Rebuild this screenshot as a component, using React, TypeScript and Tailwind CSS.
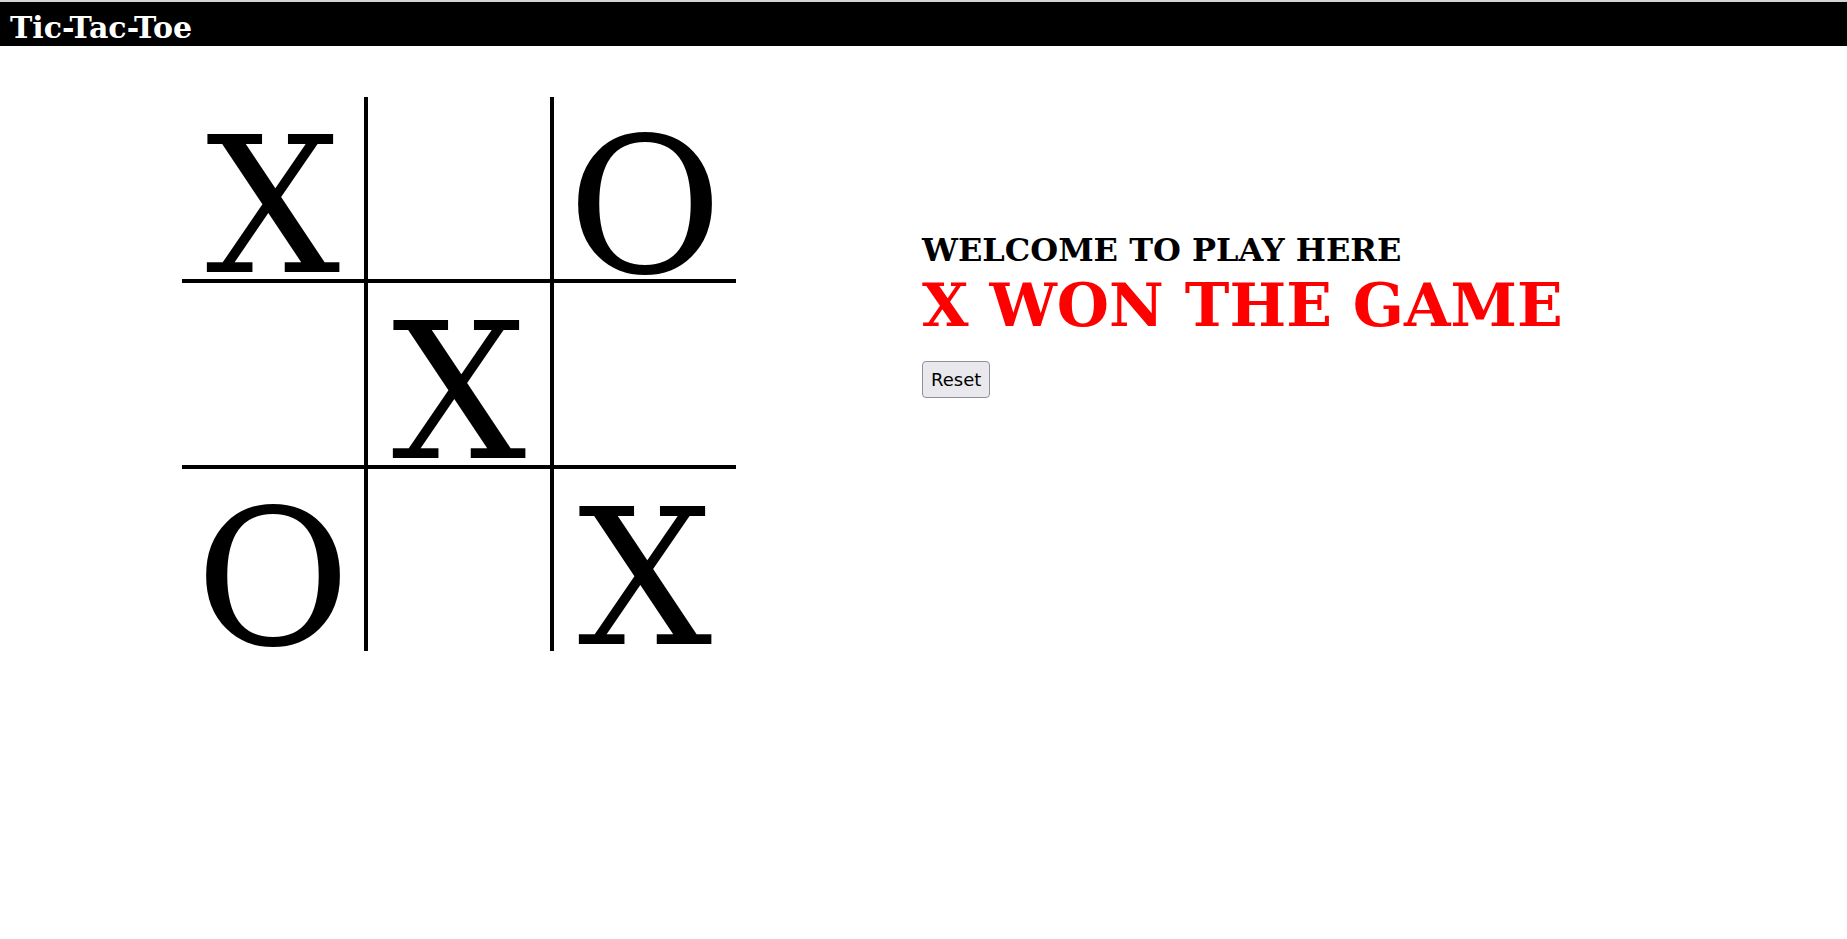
import React from "react";

const board = ["X", "", "O", "", "X", "", "O", "", "X"];

function App() {
  return (
    <div className="min-h-[939px] bg-white font-['DejaVu_Serif',serif]">
      <div className="h-[2px] bg-[#d4d4d4]"></div>
      <div className="h-[44px] bg-black pl-[10px] pt-[8px]">
        <h1 className="text-[30px] font-bold leading-[normal] text-white">Tic-Tac-Toe</h1>
      </div>
      <div className="flex items-start pt-[51px]">
        <div className="ml-[182px] grid grid-cols-[182px_182px_182px] grid-rows-[182px_182px_182px] gap-[4px] bg-black">
          {board.map((v, i) => (
            <div key={i} className="bg-white text-center text-[189px] leading-[normal] text-black">
              {v}
            </div>
          ))}
        </div>
        <div className="ml-[186px] mt-[134px]">
          <h2 className="text-[32px] font-bold leading-[normal] text-black">WELCOME TO PLAY HERE</h2>
          <h2 className="mt-[1px] text-[60px] font-bold leading-[normal] text-[#ff0000]">X WON THE GAME</h2>
          <button className="mt-[21px] h-[37px] rounded-[4px] border border-[#8f8f9d] bg-[#e9e9ed] px-[8px] font-['DejaVu_Sans',sans-serif] text-[18px] text-black">
            Reset
          </button>
        </div>
      </div>
    </div>
  );
}

export default App;
